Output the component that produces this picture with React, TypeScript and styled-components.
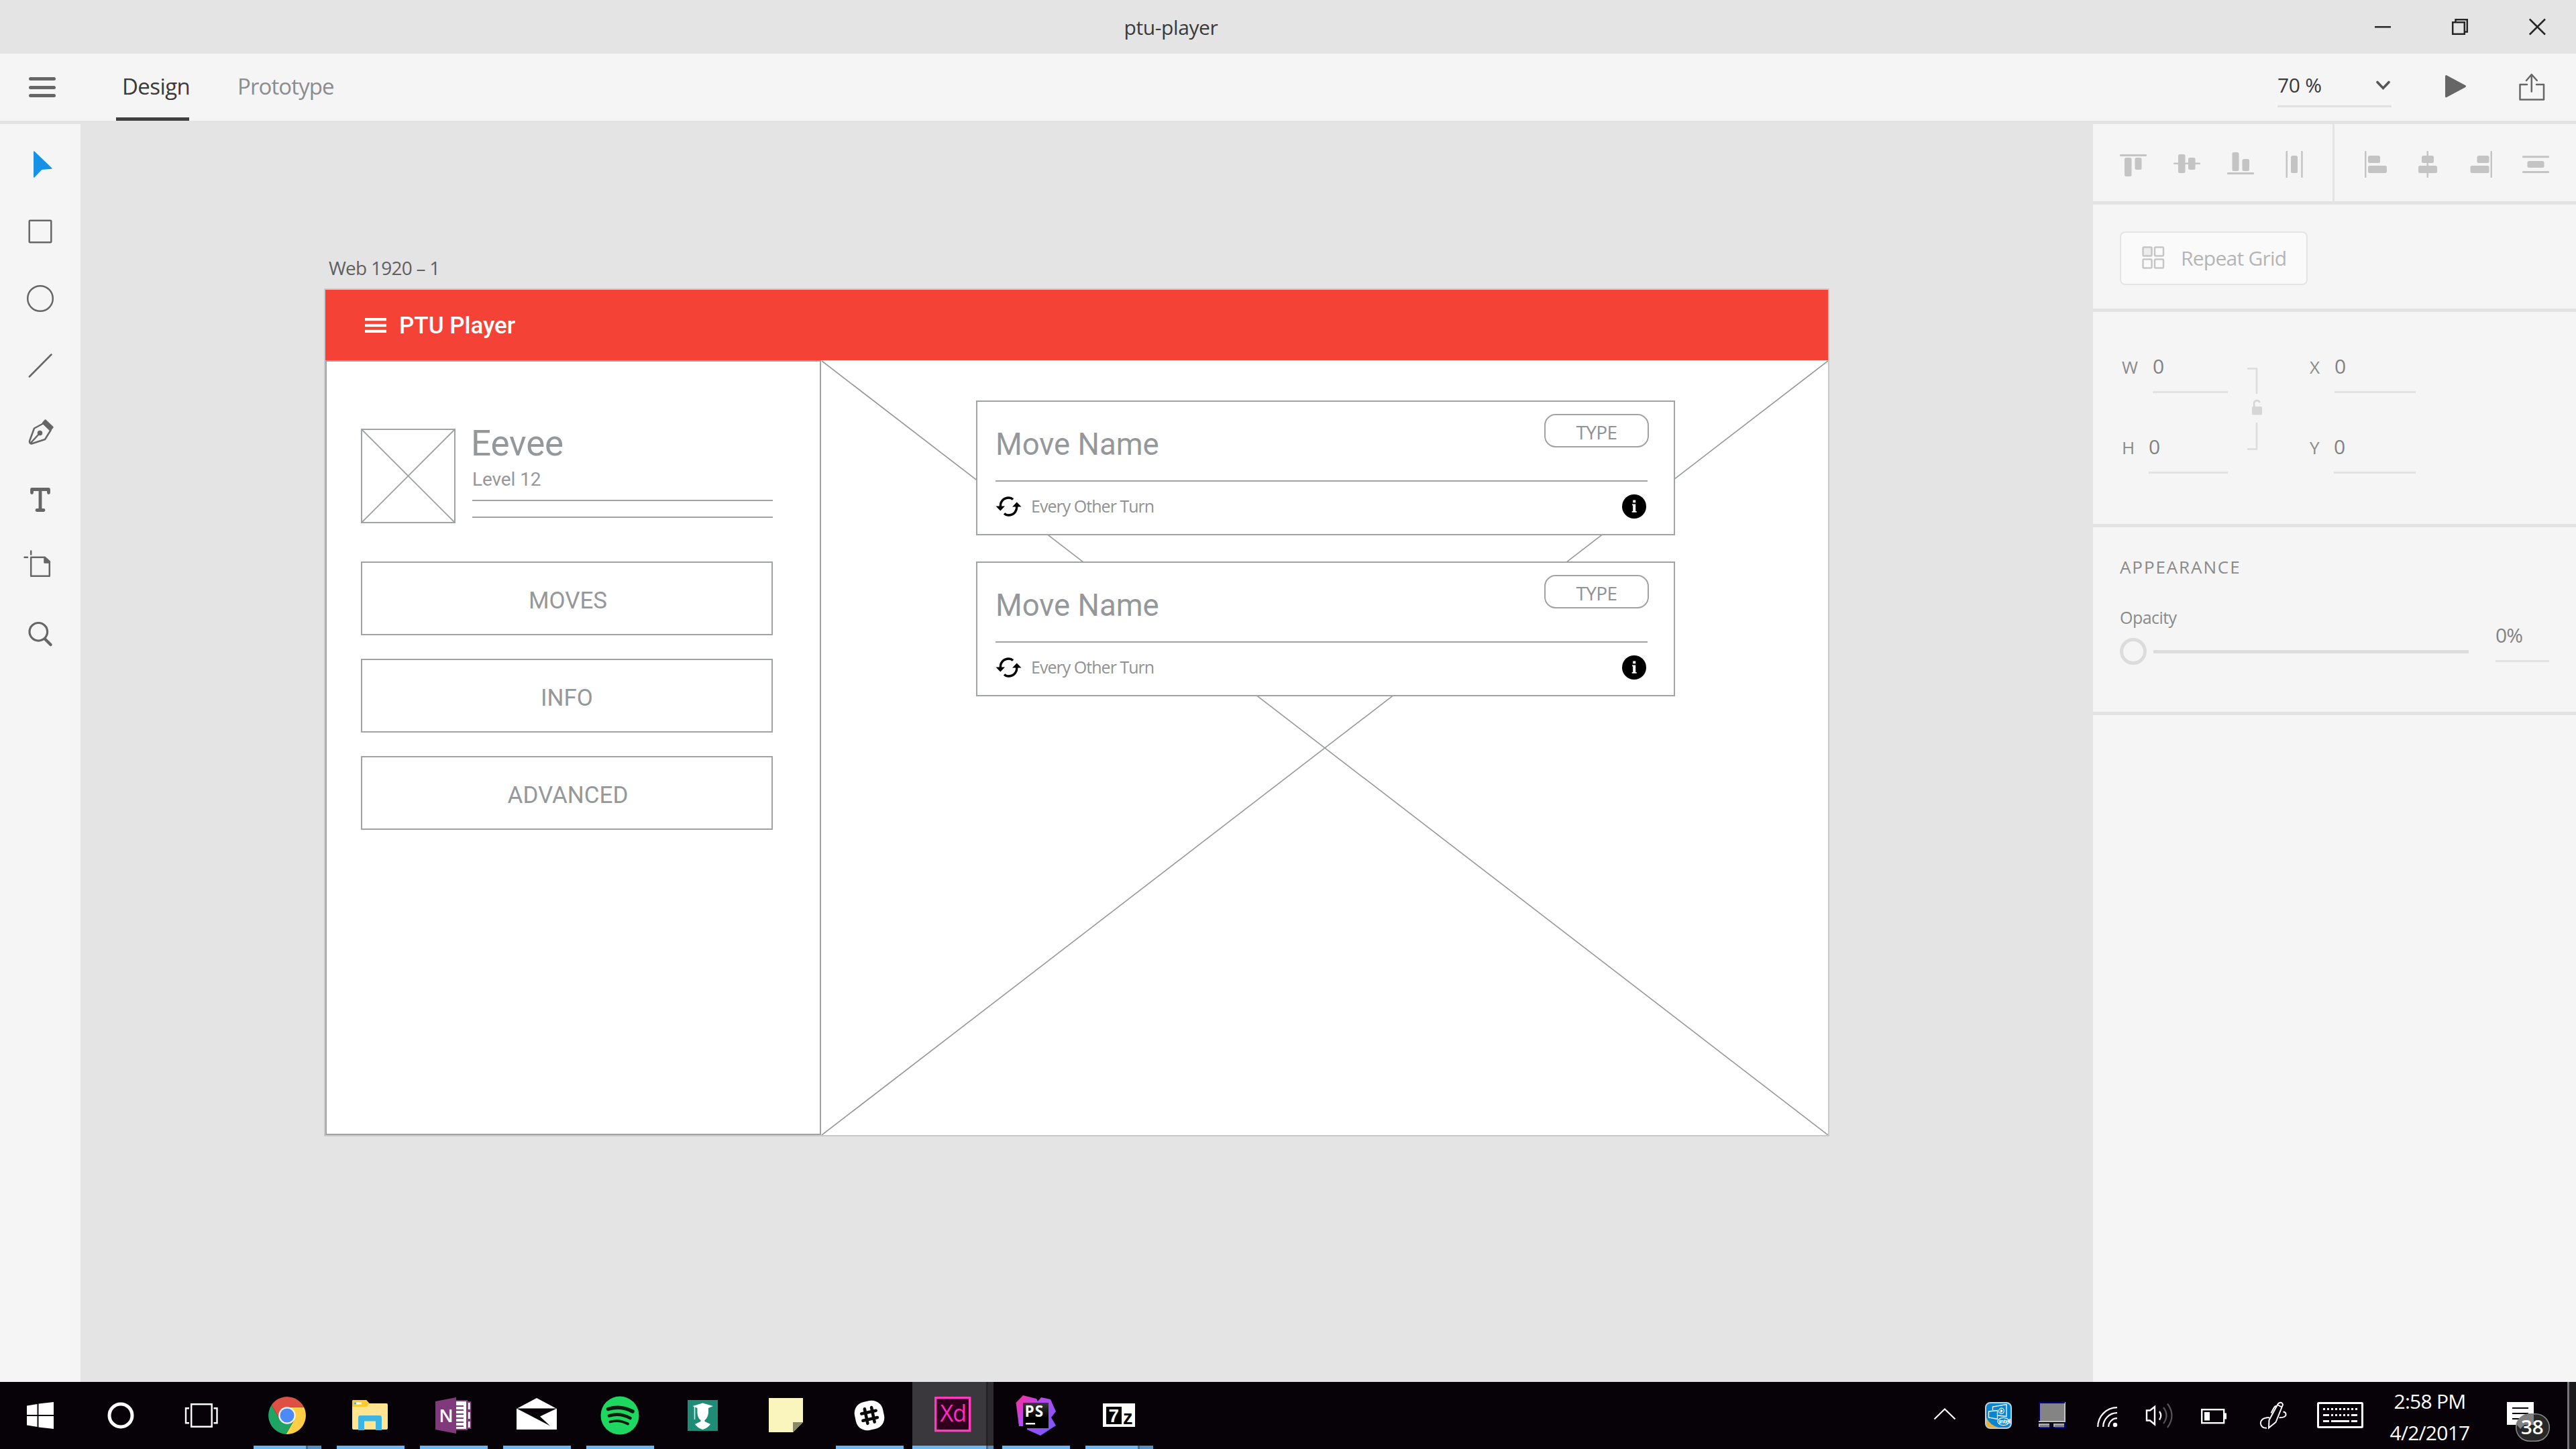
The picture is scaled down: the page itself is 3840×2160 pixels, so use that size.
import React from "react";
import styled, { createGlobalStyle } from "styled-components";

const UI = `"Open Sans", "Noto Sans", sans-serif`;
const RB = `Roboto, "Open Sans", sans-serif`;
const WIRE = "#a0a3a5";
const LINE = "#e4e4e4";

const GlobalStyle = createGlobalStyle`
  * { box-sizing: border-box; }
  body { margin: 0; background: ${LINE}; font-family: ${UI}; }
  svg { display: block; flex: none; }
`;

/* ---------- shell ---------- */

const Screen = styled.div`
  width: 3840px;
  height: 2160px;
  display: flex;
  flex-direction: column;
  overflow: hidden;
  background: ${LINE};
`;

const TitleBar = styled.header`
  height: 80px;
  flex: none;
  display: flex;
  align-items: center;
`;

const WindowTitle = styled.div`
  flex: 1;
  padding-right: 4px;
  text-align: center;
  font-size: 30px;
  letter-spacing: -0.4px;
  color: #3a3a3a;
`;

const Toolbar = styled.nav`
  height: 105px;
  flex: none;
  display: flex;
  align-items: stretch;
  background: #f5f5f5;
  border-bottom: 5px solid #e3e3e3;
`;

const MenuButton = styled.div`
  width: 173px;
  padding: 35px 0 0 43px;
  display: flex;
  flex-direction: column;
  gap: 7.5px;
`;

const MenuBar = styled.span`
  width: 40px;
  height: 5px;
  border-radius: 2.5px;
  background: #666;
`;

const Tab = styled.div<{ $active?: boolean }>`
  display: flex;
  align-items: center;
  height: 100px;
  padding: 0 0 3px 9px;
  margin-right: 63px;
  width: ${(p) => (p.$active ? "109px" : "150px")};
  font-size: 33px;
  letter-spacing: ${(p) => (p.$active ? "-0.6px" : "-0.9px")};
  color: ${(p) => (p.$active ? "#3a3a3a" : "#8c8c8c")};
  box-shadow: ${(p) => (p.$active ? "inset 0 -5px 0 #3f3f3f" : "none")};
`;

const Spacer = styled.div`
  flex: 1;
`;

const ZoomField = styled.div`
  width: 170px;
  height: 64px;
  margin-top: 16px;
  display: flex;
  align-items: center;
  justify-content: space-between;
  border-bottom: 3px solid #e0e0e0;
  font-size: 30px;
  letter-spacing: -0.3px;
  color: #3a3a3a;
`;

const ToolbarIcons = styled.div`
  width: 275px;
  height: 100px;
`;

const Workspace = styled.main`
  height: 1875px;
  flex: none;
  display: flex;
`;

/* ---------- tools ---------- */

const ToolRail = styled.aside`
  width: 120px;
  padding-top: 10px;
  background: #f5f5f5;
`;

const Tool = ({ children }: { children: React.ReactNode }) => (
  <svg width="120" height="100" viewBox="0 0 120 100" fill="none" stroke="#666" strokeWidth="2.5" strokeLinecap="round" strokeLinejoin="round">
    {children}
  </svg>
);

/* ---------- canvas ---------- */

const Canvas = styled.section`
  width: 3000px;
  padding: 195px 0 0 365px;
`;

const ArtboardLabel = styled.div`
  height: 52px;
  padding-left: 5px;
  line-height: 39px;
  font-size: 28px;
  letter-spacing: -0.75px;
  color: #606060;
`;

const Artboard = styled.div`
  width: 2240px;
  height: 1260px;
  display: flex;
  flex-direction: column;
  background: #fff;
  box-shadow: 0 0 0 2px #c9c9c9;
`;

const AppHeader = styled.div`
  height: 105px;
  flex: none;
  display: flex;
  align-items: center;
  padding-left: 59px;
  gap: 19px;
  background: #f44336;
  color: #fff;
  font: 500 35px/105px ${RB};
`;

const AppName = styled.span`
  padding-top: 2px;
`;

const AppBody = styled.div`
  flex: 1;
  display: flex;
`;

const SidePanel = styled.div`
  width: 739px;
  padding: 100px 70px 0 51px;
  border: 2px solid ${WIRE};
`;

const Profile = styled.div`
  display: flex;
  gap: 25px;
  height: 140px;
  margin-bottom: 58px;
`;

const ProfileInfo = styled.div`
  width: 448px;
`;

const PokemonName = styled.div`
  height: 44px;
  margin-left: -2px;
  font: 400 53px/45px ${RB};
  letter-spacing: -0.2px;
  color: #95989a;
`;

const Level = styled.div`
  height: 62px;
  font: 400 28px/63px ${RB};
  letter-spacing: -0.1px;
  color: #95989a;
`;

const Rule = styled.div<{ $gap?: number }>`
  height: 2px;
  margin-top: ${(p) => p.$gap ?? 0}px;
  background: ${WIRE};
`;

const WireButton = styled.div<{ $shift: number }>`
  height: 110px;
  margin-bottom: 35px;
  padding: 7px 0 0 ${(p) => p.$shift}px;
  display: flex;
  align-items: center;
  justify-content: center;
  border: 2px solid ${WIRE};
  font: 400 35px/40px ${RB};
  color: #95989a;
`;

const Stage = styled.div`
  position: relative;
  flex: 1;
  padding: 60px 0 0 231px;
`;

const StageCross = styled.svg`
  position: absolute;
  left: 0;
  top: 0;
`;

const Card = styled.div`
  position: relative;
  width: 1042px;
  height: 201px;
  margin-bottom: 39px;
  padding: 0 39px 0 27px;
  background: #fff;
  border: 2px solid ${WIRE};
`;

const CardTop = styled.div`
  height: 117px;
  display: flex;
  justify-content: space-between;
  align-items: flex-start;
`;

const MoveName = styled.div`
  font: 400 45.5px/127px ${RB};
  color: #95989a;
`;

const TypePill = styled.div`
  width: 156px;
  height: 50px;
  margin: 18px -2px 0 0;
  border: 2px solid ${WIRE};
  border-radius: 17px;
  text-align: center;
  font-size: 28px;
  line-height: 50px;
  letter-spacing: -0.6px;
  color: #8f9294;
`;

const CardBottom = styled.div`
  height: 74px;
  display: flex;
  align-items: center;
`;

const Frequency = styled.div`
  flex: 1;
  padding: 0 0 2px 14px;
  font-size: 25px;
  letter-spacing: -0.97px;
  color: #8f9294;
`;

/* ---------- inspector ---------- */

const Inspector = styled.aside`
  width: 720px;
  background: #f5f5f5;
`;

const AlignRow = styled.div`
  height: 120px;
  display: flex;
  border-bottom: 5px solid #e3e3e3;
`;

const AlignGroup = styled.div<{ $first?: boolean }>`
  display: flex;
  width: 360px;
  padding-left: 20px;
  border-right: ${(p) => (p.$first ? "3px solid #e3e3e3" : "none")};
`;

const Section = styled.div<{ $h: number; $top: number }>`
  height: ${(p) => p.$h}px;
  padding: ${(p) => p.$top}px 40px 0;
  border-bottom: 5px solid #e3e3e3;
`;

const RepeatGrid = styled.div`
  width: 280px;
  height: 80px;
  padding: 0 0 2px 31px;
  display: flex;
  align-items: center;
  gap: 24px;
  background: #fafafa;
  border: 2.5px solid ${LINE};
  border-radius: 8px;
  font-size: 30px;
  letter-spacing: -0.75px;
  color: #b5b5b5;
`;

const Dimensions = styled.div`
  display: flex;
  padding-left: 3px;
`;

const FieldColumn = styled.div`
  width: 158px;
  display: flex;
  flex-direction: column;
  gap: 44px;
`;

const Field = styled.div`
  display: flex;
  height: 76px;
`;

const FieldLabel = styled.div<{ $w: number }>`
  width: ${(p) => p.$w}px;
  font-size: 26px;
  line-height: 74px;
  color: #8a8a8a;
`;

const FieldValue = styled.div`
  flex: 1;
  border-bottom: 3px solid #e2e2e2;
  font-size: 30px;
  line-height: 71px;
  letter-spacing: -1px;
  color: #828282;
`;

const LockCell = styled.div`
  width: 122px;
  padding: 38px 0 0 26px;
`;

const SectionTitle = styled.div`
  height: 40px;
  line-height: 38px;
  font-size: 26px;
  letter-spacing: 1.9px;
  color: #8a8a8a;
`;

const OpacityRow = styled.div`
  display: flex;
  gap: 40px;
  margin-top: 35px;
`;

const OpacityControl = styled.div`
  width: 520px;
`;

const OpacityLabel = styled.div`
  height: 40px;
  margin-bottom: 10px;
  font-size: 25px;
  line-height: 38px;
  letter-spacing: -0.55px;
  color: #8a8a8a;
`;

const Slider = styled.div`
  display: flex;
  align-items: center;
  gap: 10px;
`;

const Knob = styled.div`
  width: 40px;
  height: 40px;
  border: 5px solid #dcdcdc;
  border-radius: 50%;
`;

const Track = styled.div`
  flex: 1;
  height: 5px;
  background: #dcdcdc;
`;

const OpacityValue = styled(Field)`
  width: 80px;
  margin-top: 10px;
`;

/* ---------- taskbar ---------- */

const Taskbar = styled.footer`
  height: 100px;
  flex: none;
  display: flex;
  background: #060208;
  color: #fff;
`;

const SystemButtons = styled.div`
  display: flex;
  width: 368px;
`;

const TaskCell = styled.div<{ $active?: boolean }>`
  position: relative;
  width: ${(p) => (p.$active ? 121 : 120)}px;
  margin-right: ${(p) => (p.$active ? 3 : 4)}px;
  height: 100px;
  padding: 20px 0 0 30px;
  background: ${(p) =>
    p.$active ? "linear-gradient(90deg,#3a383c 110px,#242226 110px,#242226 113px,#2e2c30 113px)" : "none"};
`;

const Running = styled.div<{ $full?: boolean; $multi?: boolean }>`
  position: absolute;
  left: ${(p) => (p.$full ? 0 : 10)}px;
  width: ${(p) => (p.$full ? 121 : 101)}px;
  bottom: 0;
  height: 5px;
  background: ${(p) => {
    if (!p.$multi) return "#6cb7f2";
    const s = p.$full ? 110 : 78;
    return `linear-gradient(90deg,#6cb7f2 ${s}px,#3b6c92 ${s}px,#3b6c92 ${s + 3}px,#5190c0 ${s + 3}px)`;
  }};
`;

const Tray = styled.div`
  display: flex;
  width: 981px;
`;

const Clock = styled.div`
  width: 166px;
  display: flex;
  flex-direction: column;
  align-items: center;
  padding-top: 5px;
  font-size: 30px;
  line-height: 47px;
  letter-spacing: -0.75px;
`;

const ShowDesktop = styled.div`
  width: 13px;
  border-left: 3px solid #77757a;
  background: #1b1a1d;
`;

const SvgText = ({ x, y, size, fill, weight, children, font, ls }: any) => (
  <text x={x} y={y} fontFamily={font ?? "Open Sans"} fontSize={size} fill={fill} stroke="none" fontWeight={weight ?? 400} letterSpacing={ls ?? 0}>
    {children}
  </text>
);

const WinButtons = () => (
  <svg width="345" height="80" viewBox="0 0 345 80" fill="none" stroke="#262626" strokeWidth="2.5">
    <path d="M45 40.2H69" />
    <path d="M161.2 33.2h17.6v17.6h-17.6z M165.5 33V29.2h17.3v18.3h-3.5" />
    <path d="M275.8 28.5L299 51.5M299 28.5L275.8 51.5" />
  </svg>
);

const AlignIcon = ({ lines, bars }: { lines: number[][]; bars: number[][] }) => (
  <svg width="80" height="115" viewBox="0 0 80 115" fill="#c4c4c4">
    {lines.map(([x, y, w, h], i) => (
      <rect key={i} x={x} y={y} width={w} height={h} rx="1" />
    ))}
    {bars.map(([x, y, w, h], i) => (
      <rect key={"b" + i} x={x} y={y} width={w} height={h} rx="2.5" />
    ))}
  </svg>
);

const moves = [1, 2];
const tabs = [
  { label: "MOVES", shift: 3 },
  { label: "INFO", shift: 0 },
  { label: "ADVANCED", shift: 3 },
];

const RefreshIcon = () => (
  <svg width="39" height="30" viewBox="0 0 39 30">
    <path d="M7.500 16C6.500 9 11 2 20 2c3 0 4.500 1 6 2.500" fill="none" stroke="#000" strokeWidth="3.400" />
    <path d="M31.500 14C32.500 21 28 28 19 28c-3 0-4.500-1-6-2.500" fill="none" stroke="#000" strokeWidth="3.400" />
    <path d="M0.500 14.500h13.500L7.300 21.500z M38.500 15.500h-13.500L31.700 8.500z" />
  </svg>
);

const TaskIcon = ({ children }: { children: React.ReactNode }) => (
  <svg width="60" height="60" viewBox="0 0 60 60">
    {children}
  </svg>
);

export default function App() {
  return (
    <Screen>
      <GlobalStyle />
      <TitleBar>
        <WindowTitle>ptu-player</WindowTitle>
        <WinButtons />
      </TitleBar>

      <Toolbar>
        <MenuButton>
          <MenuBar />
          <MenuBar />
          <MenuBar />
        </MenuButton>
        <Tab $active>Design</Tab>
        <Tab>Prototype</Tab>
        <Spacer />
        <ZoomField>
          70 %
          <svg width="24" height="16" viewBox="0 0 24 16" fill="none" stroke="#555" strokeWidth="3.6" strokeLinecap="round">
            <path d="M3 3.500l8.500 9 8.500-9" />
          </svg>
        </ZoomField>
        <ToolbarIcons>
          <svg width="275" height="100" viewBox="0 0 275 100">
            <path d="M81.500 33.500l28 15.100-28 15.200z" fill="#666" stroke="#666" strokeWidth="3" strokeLinejoin="round" />
            <path
              d="M202 46h-10.500v22.500h35.500V46h-11 M208.800 56.500V31.500 M201 40l7.800-9 8 9"
              fill="none"
              stroke="#666"
              strokeWidth="2.5"
              strokeLinecap="round"
              strokeLinejoin="round"
            />
          </svg>
        </ToolbarIcons>
      </Toolbar>

      <Workspace>
        <ToolRail>
          <Tool>
            <path d="M50.800 31L76.800 56 62 57.200 50.800 69z" fill="#1592e6" stroke="#1592e6" strokeWidth="1.5" />
          </Tool>
          <Tool>
            <rect x="43.700" y="33.700" width="32.600" height="32.600" rx="1" />
          </Tool>
          <Tool>
            <circle cx="60" cy="50" r="18.800" />
          </Tool>
          <Tool>
            <path d="M43.800 66.500L76.500 33.500" />
          </Tool>
          <Tool>
            <path d="M51 43.500L65 36 75.500 46.500 67 60 47 66.500Q43.500 66 44 62.500z M46 65L59 51" />
            <circle cx="59.500" cy="50.500" r="2.500" fill="#666" />
            <path d="M67.500 31.500L78.500 42 75 46 64 35.500z" fill="#666" />
          </Tool>
          <Tool>
            <path d="M47.500 39.500V34.500H72.500V39.500 M60 34.500V65.500 M55 65.500H65" strokeWidth="4.800" />
          </Tool>
          <Tool>
            <path d="M46.200 35.800H67L73.800 42V63.800H46.200z M46.200 26.500V31.500 M36.500 35.800H41" />
            <path d="M66.500 36V43.500H73.800z" fill="#666" />
          </Tool>
          <Tool>
            <circle cx="57.300" cy="46.800" r="13.300" strokeWidth="3.200" />
            <path d="M67 57.500L75.500 66" strokeWidth="4.500" />
          </Tool>
        </ToolRail>

        <Canvas>
          <ArtboardLabel>Web 1920 – 1</ArtboardLabel>
          <Artboard>
            <AppHeader>
              <svg width="32" height="24" viewBox="0 0 32 24" fill="#fff">
                <rect width="32" height="4.200" y="1" />
                <rect width="32" height="4.200" y="9.900" />
                <rect width="32" height="4.200" y="18.800" />
              </svg>
              <AppName>PTU Player</AppName>
            </AppHeader>
            <AppBody>
              <SidePanel>
                <Profile>
                  <svg width="141" height="141" viewBox="0 0 141 141" fill="none" stroke={WIRE} strokeWidth="2">
                    <rect x="1" y="1" width="139" height="139" />
                    <path d="M1 1L140 140M140 1L1 140" strokeWidth="1.800" />
                  </svg>
                  <ProfileInfo>
                    <PokemonName>Eevee</PokemonName>
                    <Level>Level 12</Level>
                    <Rule />
                    <Rule $gap={23} />
                  </ProfileInfo>
                </Profile>
                {tabs.map((t) => (
                  <WireButton key={t.label} $shift={t.shift}>
                    {t.label}
                  </WireButton>
                ))}
              </SidePanel>
              <Stage>
                <StageCross width="1501" height="1155" viewBox="0 0 1501 1155" fill="none" stroke="#95989a" strokeWidth="1.600">
                  <path d="M1 1L1501 1155M1501 1L1 1155" />
                </StageCross>
                {moves.map((m) => (
                  <Card key={m}>
                    <CardTop>
                      <MoveName>Move Name</MoveName>
                      <TypePill>TYPE</TypePill>
                    </CardTop>
                    <Rule />
                    <CardBottom>
                      <RefreshIcon />
                      <Frequency>Every Other Turn</Frequency>
                      <svg width="38" height="36" viewBox="0 0 38 36">
                        <circle cx="18" cy="18" r="18" />
                        <path d="M16.200 8.500h4v3.800h-4z M15 14.500h5.200v10.500h1.500v1.800h-7v-1.800h1.500v-8.700H15z" fill="#fff" />
                      </svg>
                    </CardBottom>
                  </Card>
                ))}
              </Stage>
            </AppBody>
          </Artboard>
        </Canvas>

        <Inspector>
          <AlignRow>
            <AlignGroup $first>
              <AlignIcon lines={[[20, 45, 40, 3]]} bars={[[27, 50, 10.500, 28], [42.500, 50, 10, 18]]} />
              <AlignIcon lines={[[20, 57.500, 40, 2.500]]} bars={[[27, 45, 10.500, 28], [42, 50, 10.500, 18]]} />
              <AlignIcon lines={[[20, 72, 40, 3]]} bars={[[27.500, 42, 10, 28], [42.500, 52, 10.500, 18]]} />
              <AlignIcon lines={[[27.500, 40, 2.500, 40], [50.200, 40, 2.500, 40]]} bars={[[35, 47, 10, 26]]} />
            </AlignGroup>
            <AlignGroup>
              <AlignIcon lines={[[25, 40, 2.500, 40]]} bars={[[30, 47, 18, 11], [30, 62, 28, 11]]} />
              <AlignIcon lines={[[37.500, 40, 2.500, 40]]} bars={[[30, 47, 18, 11], [25, 62, 28, 11]]} />
              <AlignIcon lines={[[52.500, 40, 2.500, 40]]} bars={[[32.500, 47, 18, 11], [22.500, 62, 28, 11]]} />
              <AlignIcon lines={[[20, 47.300, 40, 3], [20, 70, 40, 3]]} bars={[[27.500, 55, 25, 10]]} />
            </AlignGroup>
          </AlignRow>
          <Section $h={160} $top={40}>
            <RepeatGrid>
              <svg width="34" height="34" viewBox="0 0 34 34" fill="none" stroke="#c6c6c6" strokeWidth="2.500">
                <rect x="1.500" y="1.500" width="13" height="13" rx="1.500" fill="#ececec" />
                <rect x="19" y="1.500" width="13" height="13" rx="1.500" />
                <rect x="1.500" y="19.500" width="13" height="13" rx="1.500" />
                <rect x="19" y="19.500" width="13" height="13" rx="1.500" />
              </svg>
              Repeat Grid
            </RepeatGrid>
          </Section>
          <Section $h={321} $top={45}>
            <Dimensions>
              <FieldColumn>
                <Field>
                  <FieldLabel $w={46}>W</FieldLabel>
                  <FieldValue>0</FieldValue>
                </Field>
                <Field>
                  <FieldLabel $w={40}>H</FieldLabel>
                  <FieldValue>0</FieldValue>
                </Field>
              </FieldColumn>
              <LockCell>
                <svg width="26" height="124" viewBox="0 0 26 124" fill="none" stroke="#dcdcdc" strokeWidth="2.500">
                  <path d="M3 1.500H17V39 M17 82V121.500H3" />
                  <path d="M13 60V54.500Q13 49.500 17 49Q20.500 49 21.500 52" stroke="#d4d4d4" />
                  <rect x="10" y="58" width="15" height="12.500" rx="1.500" fill="#d6d6d6" stroke="none" />
                </svg>
              </LockCell>
              <FieldColumn>
                <Field>
                  <FieldLabel $w={37}>X</FieldLabel>
                  <FieldValue>0</FieldValue>
                </Field>
                <Field>
                  <FieldLabel $w={36}>Y</FieldLabel>
                  <FieldValue>0</FieldValue>
                </Field>
              </FieldColumn>
            </Dimensions>
          </Section>
          <Section $h={280} $top={40}>
            <SectionTitle>APPEARANCE</SectionTitle>
            <OpacityRow>
              <OpacityControl>
                <OpacityLabel>Opacity</OpacityLabel>
                <Slider>
                  <Knob />
                  <Track />
                </Slider>
              </OpacityControl>
              <OpacityValue>
                <FieldValue>0%</FieldValue>
              </OpacityValue>
            </OpacityRow>
          </Section>
        </Inspector>
      </Workspace>

      <Taskbar>
        <SystemButtons>
          <svg width="360" height="100" viewBox="0 0 360 100" fill="none" stroke="#fff">
            <path d="M40 35.500L55.500 33V49H40z M57.500 32.600L80 30V49H57.500z M40 51H55.500V67L40 64.500z M57.500 51H80V70L57.500 67.400z" fill="#fff" stroke="none" />
            <circle cx="180" cy="50" r="17" strokeWidth="5" />
            <path d="M285.200 33.200h30.500v33.600h-30.500z M282 39.200h-5v22h5 M318.500 39.200h5v22h-5" strokeWidth="2.400" />
          </svg>
        </SystemButtons>

        <TaskCell>
          <TaskIcon>
            <g transform="translate(30 30)">
              <path d="M25-12.500A28 28 0 0 1-1.700 27.900L10.800 6.250L0-12.500z" fill="#ffce44" />
              <path d="M-1.700 27.900A28 28 0 0 1-23.300-15.400L-10.800 6.250L10.800 6.250z" fill="#1fa463" />
              <path d="M-23.300-15.400A28 28 0 0 1 25-12.500L0-12.500L-10.800 6.250z" fill="#dd5144" />
              <circle r="12.800" fill="#f1f1f1" />
              <circle r="10.500" fill="#4c8bf5" />
            </g>
          </TaskIcon>
          <Running $multi />
        </TaskCell>

        <TaskCell>
          <TaskIcon>
            <path d="M3 9Q3 7 5 7H24L28.500 12H54Q56 12 56 14V49Q56 51 54 51H5Q3 51 3 49z" fill="#ffe592" />
            <path d="M3 9Q3 7 5 7H24L28.500 12L25 17H3z" fill="#fecb2f" />
            <rect x="6" y="10.500" width="11" height="3" fill="#fff" />
            <rect x="6" y="10.500" width="3" height="3" fill="#3bb5e6" />
            <path d="M12 52V34Q12 30 15 30H44Q47 30 47 34V52H38V38.500H21V52z" fill="#3bb5e6" />
          </TaskIcon>
          <Running />
        </TaskCell>

        <TaskCell>
          <TaskIcon>
            <path d="M33 8H50V51H33z" fill="#fff" stroke="#80397b" strokeWidth="2" />
            <path d="M34 16H45M34 22H45M34 28H45M34 34H45M34 40H45M34 46H45" stroke="#80397b" strokeWidth="2.200" />
            <path d="M51 10H55.500V22H51z M51 24H55.500V36H51z M51 38H55.500V49H51z" fill="#fff" stroke="#80397b" strokeWidth="1.800" />
            <path d="M3 9L34 3V57L3 51z" fill="#80397b" />
            <SvgText x="8.500" y="40" size="27" fill="#fff" weight={600}>
              N
            </SvgText>
          </TaskIcon>
          <Running />
        </TaskCell>

        <TaskCell>
          <TaskIcon>
            <path d="M0 20L30 4L60 20V51H0z" fill="#fff" />
            <path d="M0 19.500H60L35 31.500L50 45.500z" fill="#060208" />
          </TaskIcon>
          <Running />
        </TaskCell>

        <TaskCell>
          <TaskIcon>
            <circle cx="30" cy="30" r="28.500" fill="#1ed760" />
            <g fill="none" stroke="#0d1a10" strokeLinecap="round">
              <path d="M12.500 20.500Q31 14.500 49 24" strokeWidth="5.500" />
              <path d="M14 30.500Q30 25.500 45.500 34" strokeWidth="4.600" />
              <path d="M15.500 39.500Q29 35.500 42 42.500" strokeWidth="3.800" />
            </g>
          </TaskIcon>
          <Running />
        </TaskCell>

        <TaskCell>
          <TaskIcon>
            <rect x="7" y="7" width="45" height="46" fill="#1f8c78" />
            <path d="M14.500 16L29.500 11.500L45 16L38 19V26Q37 34 32.500 37V39L41 43Q38 48 29.500 51Q21 48 18 43L26.500 39V37Q22 34 21.500 26V19z" fill="#fff" />
            <path d="M17.500 17V36" stroke="#fff" strokeWidth="1.500" />
          </TaskIcon>
        </TaskCell>

        <TaskCell>
          <TaskIcon>
            <path d="M4 4H55V40L40 55H4z" fill="#faf5bd" />
            <path d="M40 55V40H55z" fill="#8a8866" />
          </TaskIcon>
        </TaskCell>

        <TaskCell>
          <TaskIcon>
            <g transform="rotate(-12 30 30)">
              <rect x="8.500" y="8.500" width="43" height="43" rx="17" fill="#fff" />
              <path d="M25 19V41M35.500 19V41M19 25H41M19 35.500H41" stroke="#0a0a0a" strokeWidth="4.600" strokeLinecap="round" />
            </g>
          </TaskIcon>
          <Running />
        </TaskCell>

        <TaskCell $active>
          <TaskIcon>
            <rect x="4.700" y="3.700" width="51" height="49" fill="#2e001e" stroke="#ff3cc0" strokeWidth="3.400" />
            <SvgText x="11.500" y="39" size="34" fill="#ff2bc2" ls="-1" weight={500}>
              Xd
            </SvgText>
          </TaskIcon>
          <Running $full $multi />
        </TaskCell>

        <TaskCell>
          <svg width="60" height="60" viewBox="0 0 60 60">
            <defs>
              <linearGradient id="ps" x1="0" y1="0" x2="1" y2="1">
                <stop offset="0" stopColor="#ff2d92" />
                <stop offset=".4" stopColor="#b64af2" />
                <stop offset="1" stopColor="#6a5bff" />
              </linearGradient>
              <linearGradient id="pk" x1="0" y1="0" x2="0" y2="1">
                <stop offset="0" stopColor="#3a3a3a" />
                <stop offset=".6" stopColor="#000" />
              </linearGradient>
            </defs>
            <path d="M0.500 11L11 0L31 5L33 9L38 3L52 6L60 24L53 33L60 45L37 60L17 51V46H5z" fill="url(#ps)" />
            <rect x="11" y="11" width="38" height="38" fill="url(#pk)" />
            <SvgText x="13.500" y="32" size="22.500" fill="#fff" weight={700} ls="1">
              PS
            </SvgText>
            <rect x="15" y="41" width="14" height="2.500" fill="#fff" />
          </svg>
          <Running />
        </TaskCell>

        <TaskCell>
          <TaskIcon>
            <rect x="6" y="12" width="48" height="35" fill="#fff" />
            <rect x="11" y="17" width="23" height="26" fill="#000" />
            <SvgText x="14.500" y="40" size="28" fill="#fff" weight={700} font="Liberation Sans">
              7
            </SvgText>
            <SvgText x="36" y="43" size="29" fill="#000" weight={700} font="Liberation Sans">
              z
            </SvgText>
          </TaskIcon>
          <Running $multi />
        </TaskCell>

        <Spacer />

        <Tray>
          <svg width="680" height="100" viewBox="2859 0 680 100" fill="none" stroke="#fff" strokeWidth="2.200">
            <path d="M2883.500 55.500L2899 40.500L2914.500 55.500" />
            <rect x="2960" y="31" width="38" height="38" rx="7" fill="#0a84cf" stroke="#b9d5e6" strokeWidth="2" />
            <path d="M2961 53Q2966 65 2981 68.500H2967Q2961 68 2961 62z" fill="#e8b23a" stroke="none" />
            <path d="M2970.500 42V37L2991 33.500V51.500L2978 50 M2964.500 44L2977.500 42.500V55.500L2964.500 53z" strokeWidth="1.300" />
            <circle cx="2983.500" cy="43.200" r="4" strokeWidth="1.200" />
            <path d="M2982 40.500v5.500l4-2.800z" fill="#fff" stroke="none" />
            <ellipse cx="2986.500" cy="59" rx="8.500" ry="5.600" strokeWidth="1.200" />
            <text x="2979.500" y="62.200" fontSize="8.500" fontWeight="700" fontFamily="Open Sans" fill="#fff" stroke="none" letterSpacing="-.5">
              intel
            </text>
            <rect x="3039" y="30" width="40" height="30" fill="#c3c3c3" stroke="none" />
            <path d="M3039 58V30H3078v2H3041V58z" fill="#000080" stroke="none" />
            <rect x="3041" y="32" width="36" height="26" fill="#848484" stroke="none" />
            <path d="M3039 62h17.500v7H3039z M3061 62h18v7h-18z" fill="#000080" stroke="none" />
            <path d="M3039 62h16v5H3039z M3061 62h16v5h-16z" fill="#b0b0b0" stroke="none" />
            <path d="M3041 64h14v3.500h-14z M3063 64h14v3.500h-14z" fill="#848484" stroke="none" />
            <path d="M3127.200 67A28.800 28.800 0 0 1 3156 38.200 M3135.200 67A20.800 20.800 0 0 1 3156 46.200 M3143.200 67A12.800 12.800 0 0 1 3156 54.200" />
            <circle cx="3153" cy="64" r="3.200" fill="#fff" stroke="none" />
            <path d="M3200 42.500H3205L3212 37V63.500L3205 57.500H3200z" strokeWidth="2.400" />
            <path d="M3219 44Q3223.500 50 3219 56.500" />
            <path d="M3225 38Q3234 50 3225 62 M3231 32.500Q3244 50 3231 68" stroke="#56545a" />
            <rect x="3282.200" y="41.200" width="33" height="20" strokeWidth="2.400" />
            <path d="M3286 45h8v12.500h-8z M3316 46.500h3v9h-3z" fill="#fff" stroke="none" />
            <path
              d="M3398.500 31Q3402 30 3403 34L3392.500 60L3382 68.500L3382.500 57L3394.500 35Q3396 31.500 3398.500 31z M3395 34L3402 38 M3385.500 46.500L3390 38Q3392 35 3394.500 36.500 M3403.500 44.500Q3408 45 3407.500 49.500Q3406 53.500 3397.500 53.200 M3383 53.200H3379.500Q3370.500 54 3369.800 61.500Q3370.500 69 3379 68.800"
              strokeWidth="2"
            />
            <rect x="3455.500" y="31.500" width="66" height="36" rx="1" strokeWidth="3" />
            <path d="M3463 40.500H3515" strokeDasharray="3 3" strokeWidth="3" />
            <path d="M3475 49.500H3502" strokeDasharray="3 3" strokeWidth="3" />
            <path d="M3463 49.500h9 M3505 49.500h9 M3463 58.500h9 M3475 58.500h27 M3505 58.500h9" strokeWidth="3" />
          </svg>
          <Clock>
            <span>2:58 PM</span>
            <span>4/2/2017</span>
          </Clock>
          <svg width="122" height="100" viewBox="3705 0 122 100">
            <path d="M3737 30h40v34h-14l-6 6v-6h-20z" fill="#fff" />
            <path d="M3745 39h24M3745 47h24M3745 55h16" stroke="#060208" strokeWidth="2" />
            <rect x="3750.700" y="47.700" width="49.600" height="40.600" rx="20.300" fill="#2b2b2b" fillOpacity=".92" stroke="#8b8b8b" strokeWidth="1.500" />
            <path d="M3761 51Q3768 48 3777 48V64H3763L3757 70L3752 64Q3754 54 3761 51z" fill="#808080" />
            <SvgText x="3758" y="78" size="29.500" fill="#fff" weight={600}>
              38
            </SvgText>
          </svg>
          <ShowDesktop />
        </Tray>
      </Taskbar>
    </Screen>
  );
}
